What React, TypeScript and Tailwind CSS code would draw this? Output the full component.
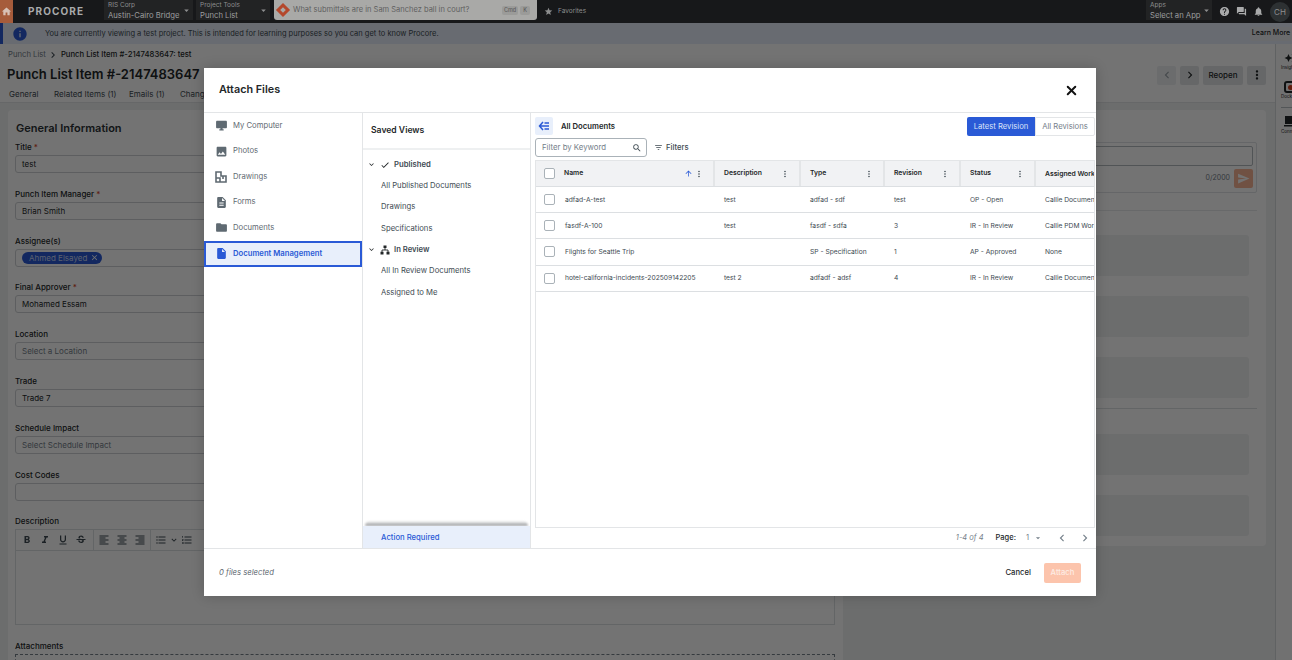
import React from 'react';
import { X } from 'lucide-react';
import {
  MdArrowDropDown,
  MdArrowUpward,
  MdAutoAwesome,
  MdCheck,
  MdChevronLeft,
  MdChevronRight,
  MdClose,
  MdDescription,
  MdDesktopWindows,
  MdExpandMore,
  MdFilterList,
  MdFolder,
  MdFormatAlignCenter,
  MdFormatAlignLeft,
  MdFormatAlignRight,
  MdFormatBold,
  MdFormatItalic,
  MdFormatListBulleted,
  MdFormatListNumbered,
  MdFormatUnderlined,
  MdHelp,
  MdHome,
  MdInfo,
  MdInsertDriveFile,
  MdMoreVert,
  MdNotifications,
  MdPhoto,
  MdQuestionAnswer,
  MdSearch,
  MdSend,
  MdStar,
  MdStrikethroughS,
} from 'react-icons/md';

const fields = [
  { label: 'Title', required: true, value: 'test' },
  { label: 'Punch Item Manager', required: true, value: 'Brian Smith' },
  { label: 'Assignee(s)', chip: 'Ahmed Elsayed' },
  { label: 'Final Approver', required: true, value: 'Mohamed Essam' },
  { label: 'Location', placeholder: 'Select a Location' },
  { label: 'Trade', value: 'Trade 7' },
  { label: 'Schedule Impact', placeholder: 'Select Schedule Impact' },
  { label: 'Cost Codes' },
];

const sources = ['My Computer', 'Photos', 'Drawings', 'Forms', 'Documents'];

const columns = ['Description', 'Type', 'Revision', 'Status'];

const rows = [
  ['adfad-A-test', 'test', 'adfad - sdf', 'test', 'OP - Open', 'Callie Document Workflow'],
  ['fasdf-A-100', 'test', 'fasdf - sdfa', '3', 'IR - In Review', 'Callie PDM Workflow'],
  ['Flights for Seattle Trip', '', 'SP - Specification', '1', 'AP - Approved', 'None'],
  ['hotel-california-incidents-202509142205', 'test 2', 'adfadf - adsf', '4', 'IR - In Review', 'Callie Document Workflow'],
];

function DrawingsIcon() {
  return (
    <svg viewBox="0 0 12 12" className="h-[12px] w-[12px] text-[#5f6a72]" fill="none" stroke="currentColor" strokeWidth="1.6">
      <path d="M1 1h5v4h5v6H1z M1 7h4v4 M6 1v3 M8 5v3" />
    </svg>
  );
}

function TreeIcon() {
  return (
    <svg viewBox="0 0 10 10" className="h-[10px] w-[10px] text-[#232729]" fill="currentColor">
      <path d="M3.5 0.5h3v2.6h-3z M0.5 6.8h3v2.7h-3z M6.5 6.8h3v2.7h-3z" />
      <path d="M5 3v2H2v2M5 5h3v2" fill="none" stroke="currentColor" strokeWidth="0.9" />
    </svg>
  );
}

function SourceIcon({ name }: { name: string }) {
  const cls = 'h-[13px] w-[13px] text-[#5f6a72]';
  if (name === 'My Computer') return <MdDesktopWindows className={cls} />;
  if (name === 'Photos') return <MdPhoto className={cls} />;
  if (name === 'Drawings') return <DrawingsIcon />;
  if (name === 'Forms') return <MdDescription className={cls} />;
  return <MdFolder className={cls} />;
}

function Selector({ top, bottom, width }: { top: string; bottom: string; width: string }) {
  return (
    <div className={`mb-[3px] flex items-center justify-between bg-[#222324] pl-[4px] pr-[1px] ${width}`}>
      <div className="whitespace-nowrap leading-[9px]">
        <div className="text-[6.5px]">{top}</div>
        <div className="mt-[1px] text-[7.7px] text-[#9c9d9e]">{bottom}</div>
      </div>
      <MdArrowDropDown className="h-[11px] w-[11px] shrink-0" />
    </div>
  );
}

function TopBar() {
  return (
    <div className="relative z-20 flex h-[23px] items-stretch bg-[#17181a] text-[#8d8e8f]">
      <div className="flex w-[13px] items-center justify-center bg-[#a65c3b]">
        <MdHome className="h-[11px] w-[11px] text-[#d8c2b6]" />
      </div>
      <div className="ml-[15px] flex w-[76px] items-center text-[10px] font-bold tracking-[1.1px] text-[#a9aaab]">PROCORE</div>
      <Selector top="RIS Corp" bottom="Austin-Cairo Bridge" width="w-[89px]" />
      <div className="w-[3px]" />
      <Selector top="Project Tools" bottom="Punch List" width="w-[74px]" />
      <div className="mb-[3px] ml-[4px] flex w-[263px] items-center rounded-b-[3px] bg-[#a9a9a7] pl-[4px] pr-[7px] text-[#5f5f5f]">
        <span className="h-[10px] w-[10px] rotate-45 border-[3px] border-[#b4472b]" />
        <span className="ml-[5px] flex-1 text-[7.5px]">What submittals are in Sam Sanchez ball in court?</span>
        <span className="rounded-[2px] bg-[#9b9b99] px-[2px] text-[5.5px] font-medium leading-[9px]">Cmd</span>
        <span className="ml-[2px] rounded-[2px] bg-[#9b9b99] px-[3px] text-[5.5px] font-medium leading-[9px]">K</span>
      </div>
      <div className="ml-[7px] flex items-center text-[6.5px]">
        <MdStar className="mr-[5px] h-[9px] w-[9px]" />
        Favorites
      </div>
      <div className="ml-auto flex items-center">
        <div className="flex self-start">
          <Selector top="Apps" bottom="Select an App" width="h-[20px] w-[66px]" />
        </div>
        <MdHelp className="ml-[7px] h-[11px] w-[11px] text-[#a9aaab]" />
        <MdQuestionAnswer className="ml-[6px] h-[11px] w-[11px] text-[#a9aaab]" />
        <MdNotifications className="ml-[6px] h-[11px] w-[11px] text-[#a9aaab]" />
        <div className="ml-[6px] mr-[2px] flex h-[20px] w-[20px] items-center justify-center rounded-full bg-[#2d3133] text-[8px] text-[#8d8e8f]">CH</div>
      </div>
    </div>
  );
}

function Banner() {
  return (
    <div className="flex h-[21px] items-center border-l-[3px] border-[#2a5ad6] bg-[#e6eefa]">
      <MdInfo className="ml-[9px] h-[16px] w-[16px] text-[#2a5ad6]" />
      <span className="ml-[17px] text-[7.5px] text-[#3e4a52]">You are currently viewing a test project. This is intended for learning purposes so you can get to know Procore.</span>
      <span className="ml-auto flex h-[14px] w-[42px] items-center justify-center rounded-[2px] bg-[#eceef2] text-[7px] font-medium text-[#232729]">Learn More</span>
    </div>
  );
}

function Field({ label, required, value, placeholder, chip }: { label: string; required?: boolean; value?: string; placeholder?: string; chip?: string }) {
  return (
    <div className="mb-[15.8px]">
      <div className="h-[13px] text-[8px] font-medium leading-[11px] text-[#232729]">
        {label}
        {required && <span className="text-[#d2401f]"> *</span>}
      </div>
      <div className="flex h-[18px] items-center rounded-[3px] border border-[#ced1d4] bg-white pl-[6px] text-[8px]">
        {chip ? (
          <span className="flex h-[12px] items-center rounded-full bg-[#2a5ad6] pl-[7px] pr-[3px] text-[#c9d6f5]">
            {chip}
            <MdClose className="ml-[3px] h-[9px] w-[9px] text-white" />
          </span>
        ) : (
          <span className={placeholder ? 'text-[#75808a]' : 'text-[#232729]'}>{value ?? placeholder}</span>
        )}
      </div>
    </div>
  );
}

function GeneralCard() {
  const editorIcons = [MdFormatBold, MdFormatItalic, MdFormatUnderlined, MdStrikethroughS];
  const alignIcons = [MdFormatAlignLeft, MdFormatAlignCenter, MdFormatAlignRight];
  return (
    <div className="w-[835px] shrink-0 rounded-t-[4px] bg-white pl-[7px] pr-[8px] pt-[10px]">
      <div className="h-[22px] pl-[1px] text-[11px] font-semibold text-[#2c3236]">General Information</div>
      {fields.map((f) => (
        <Field key={f.label} {...f} />
      ))}
      <div className="h-[13px] text-[8px] font-medium leading-[11px] text-[#232729]">Description</div>
      <div className="h-[96px] border border-[#dcdfe2]">
        <div className="flex h-[21px] items-center border-b border-[#dcdfe2] pl-[5px] text-[#3e4a52]">
          {editorIcons.map((Icon, i) => (
            <Icon key={i} className="mr-[6px] h-[12px] w-[12px]" />
          ))}
          <span className="mr-[4px] h-full w-px bg-[#dcdfe2]" />
          {alignIcons.map((Icon, i) => (
            <Icon key={i} className="mr-[6px] h-[12px] w-[12px]" />
          ))}
          <span className="-ml-[2px] mr-[4px] h-full w-px bg-[#dcdfe2]" />
          <MdFormatListBulleted className="h-[12px] w-[12px]" />
          <MdExpandMore className="mx-[2px] h-[10px] w-[10px]" />
          <MdFormatListNumbered className="h-[12px] w-[12px]" />
        </div>
      </div>
      <div className="mt-[16px] h-[12.5px] text-[8px] font-medium leading-[11px] text-[#232729]">Attachments</div>
      <div className="h-[40px] border border-dashed border-[#75808a]" />
    </div>
  );
}

function ActivityCard() {
  return (
    <div className="flex-1 self-start rounded-[4px] bg-white pb-[10px] pl-[20px] pt-[32px]">
      <div className="mr-[9px] h-[51px] rounded-[2px] border border-[#dfe3e6] pr-[3px] pt-[3px]">
        <div className="h-[20px] rounded-[2px] border border-[#b4babf]" />
        <div className="flex items-center justify-end pt-[3px]">
          <span className="mr-[4px] text-[7px] text-[#75808a]">0/2000</span>
          <span className="flex h-[19px] w-[19px] items-center justify-center rounded-[2px] bg-[#f8b496]">
            <MdSend className="h-[13px] w-[13px] text-white" />
          </span>
        </div>
      </div>
      <div className="mr-[9px] mt-[17px] h-px bg-[#e6e9eb]" />
      <div className="mr-[17px] mt-[24px] flex flex-col gap-[20px]">
        <div className="h-[41px] rounded-[3px] bg-[#f0f1f2]" />
        <div className="h-[41px] rounded-[3px] bg-[#f0f1f2]" />
        <div className="h-[41px] rounded-[3px] bg-[#f0f1f2]" />
      </div>
      <div className="mr-[9px] mt-[10px] h-px bg-[#dcdfe2]" />
      <div className="mr-[17px] mt-[25px] flex flex-col gap-[20px]">
        <div className="h-[41px] rounded-[3px] bg-[#f0f1f2]" />
        <div className="h-[41px] rounded-[3px] bg-[#f0f1f2]" />
      </div>
    </div>
  );
}

function Rail() {
  return (
    <div className="flex w-[17px] shrink-0 flex-col overflow-hidden border-l border-[#d6d9dc] bg-[#fbfbfb] pl-[5px] pt-[8px] text-[#232729]">
      <MdAutoAwesome className="ml-[3px] h-[12px] w-[12px] shrink-0" />
      <span className="h-[7px] shrink-0 whitespace-nowrap text-[4.5px] leading-[7px]">Insights</span>
      <span className="ml-[3px] mt-[10px] flex h-[12px] w-[12px] shrink-0 items-center justify-center rounded-[3px] border-[2px] border-[#232729]">
        <span className="h-[5px] w-[5px] rounded-full bg-[#d2401f]" />
      </span>
      <span className="h-[7px] shrink-0 whitespace-nowrap text-[4.5px] leading-[7px]">Dock Side</span>
      <div className="mt-[7px] h-px w-[11px] shrink-0 bg-[#b8bec3]" />
      <svg viewBox="0 0 12 11" className="ml-[3px] mt-[8px] h-[11px] w-[12px] shrink-0" fill="currentColor">
        <path d="M1 0h11v8H1z M0 9h12v1.5H0z" />
      </svg>
      <span className="mt-[1px] h-[7px] shrink-0 whitespace-nowrap text-[4.5px] leading-[7px]">Connect</span>
    </div>
  );
}

function PageHeader() {
  return (
    <div className="h-[59px] border-b border-[#e3e5e7] bg-white">
      <div className="flex h-[21px] items-center pl-[8px] text-[7.7px] text-[#75808a]">
        Punch List
        <MdChevronRight className="mx-[1px] h-[12px] w-[12px] text-[#3e4a52]" />
        <span className="ml-[1px] font-medium text-[#232729]">Punch List Item #-2147483647: test</span>
      </div>
      <div className="flex h-[20px] items-center pl-[7px] pr-[9px]">
        <span className="text-[13px] font-semibold text-[#232729]">Punch List Item #-2147483647</span>
        <div className="ml-auto flex gap-[4px]">
          <span className="flex h-[19px] w-[19px] items-center justify-center rounded-[2px] bg-[#eef0f1] text-[#9aa2a9]"><MdChevronLeft className="h-[14px] w-[14px]" /></span>
          <span className="flex h-[19px] w-[19px] items-center justify-center rounded-[2px] bg-[#e3e5e7] text-[#232729]"><MdChevronRight className="h-[14px] w-[14px]" /></span>
          <span className="flex h-[19px] w-[40px] items-center justify-center rounded-[2px] bg-[#e3e5e7] text-[8px] font-medium text-[#232729]">Reopen</span>
          <span className="flex h-[19px] w-[19px] items-center justify-center rounded-[2px] bg-[#e3e5e7] text-[#232729]"><MdMoreVert className="h-[14px] w-[14px]" /></span>
        </div>
      </div>
      <div className="flex h-[17px] items-center pl-[9px] text-[8px] text-[#3e4a52]">
        <span className="w-[45px]">General</span>
        <span className="w-[75px]">Related Items (1)</span>
        <span className="w-[51px]">Emails (1)</span>
        <span>Change History</span>
      </div>
    </div>
  );
}

function SavedViews() {
  const groups = [
    { title: 'Published', icon: <MdCheck className="h-[10px] w-[10px] text-[#232729]" />, items: ['All Published Documents', 'Drawings', 'Specifications'] },
    { title: 'In Review', icon: <TreeIcon />, items: ['All In Review Documents', 'Assigned to Me'] },
  ];
  return (
    <div className="flex w-[169px] shrink-0 flex-col border-l border-r border-[#e3e5e7]">
      <div className="flex h-[37px] shrink-0 items-center border-b-2 border-[#eef0f1] pl-[8px] text-[8.6px] font-semibold text-[#232729]">Saved Views</div>
      <div className="flex-1 pt-[4px]">
        {groups.map((g) => (
          <div key={g.title}>
            <div className="flex h-[21.3px] items-center pl-[4px] text-[7.7px] font-semibold text-[#3e4a52]">
              <MdExpandMore className="h-[9px] w-[9px] text-[#232729]" />
              <span className="ml-[4px]">{g.icon}</span>
              <span className="ml-[4px]">{g.title}</span>
            </div>
            {g.items.map((item) => (
              <div key={item} className="flex h-[21.3px] items-center pl-[18px] text-[7.7px] text-[#3e4a52]">{item}</div>
            ))}
          </div>
        ))}
      </div>
      <div className="mx-[2px] h-[5px] shrink-0 rounded-t-full bg-gradient-to-b from-white to-[#8f9194] blur-[1px]" />
      <div className="relative flex h-[22px] shrink-0 items-center bg-[#e8effb] pl-[18px] pt-[1px] text-[7.7px] font-medium text-[#2a5ad6]">Action Required</div>
    </div>
  );
}

function DocsTable() {
  const gridCols = 'grid-cols-[179px_86px_84px_76px_75px_59px]';
  return (
    <div className="flex-1 overflow-hidden border border-[#e3e5e7]">
      <div className={`grid h-[26px] border-b border-[#dcdfe2] bg-[#f1f2f4] ${gridCols}`}>
        <div className="flex items-center border-r-2 border-[#e3e5e7] pl-[8px] pr-[9px] text-[6.8px] font-semibold text-[#232729]">
          <span className="mr-[9px] h-[11px] w-[11px] rounded-[2px] border border-[#aab2b8] bg-white" />
          Name
          <MdArrowUpward className="ml-auto mr-[1px] h-[9px] w-[9px] text-[#2a5ad6]" />
          <MdMoreVert className="h-[10px] w-[10px] text-[#3e4a52]" />
        </div>
        {columns.map((c) => (
          <div key={c} className="flex items-center justify-between border-r-2 border-[#e3e5e7] pl-[9px] pr-[9px] text-[6.8px] font-semibold text-[#232729]">
            {c}
            <MdMoreVert className="h-[10px] w-[10px] text-[#3e4a52]" />
          </div>
        ))}
        <div className="overflow-hidden whitespace-nowrap pl-[9px] text-[6.8px] font-semibold leading-[26px] text-[#232729]">Assigned Workflow</div>
      </div>
      {rows.map((r) => (
        <div key={r[0]} className={`grid h-[26.2px] items-center border-b border-[#dcdfe2] text-[6.7px] text-[#3e4a52] ${gridCols}`}>
          <div className="flex items-center pl-[8px]">
            <span className="mr-[10px] h-[11px] w-[11px] shrink-0 rounded-[2px] border border-[#aab2b8] bg-white" />
            <span className="whitespace-nowrap">{r[0]}</span>
          </div>
          <div className="pl-[9px]">{r[1]}</div>
          <div className="pl-[9px]">{r[2]}</div>
          <div className="pl-[9px]">{r[3]}</div>
          <div className="pl-[9px]">{r[4]}</div>
          <div className="overflow-hidden whitespace-nowrap pl-[9px]">{r[5]}</div>
        </div>
      ))}
    </div>
  );
}

function DocsPane() {
  return (
    <div className="flex min-w-0 flex-1 flex-col pl-[4px] pr-[1px]">
      <div className="flex h-[25px] shrink-0 items-start pt-[4px]">
        <span className="flex h-[18px] w-[18px] items-center justify-center rounded-[2px] bg-[#e8effb]">
          <svg viewBox="0 0 12 10" className="h-[10px] w-[12px] text-[#2a5ad6]" fill="none" stroke="currentColor" strokeWidth="1.5">
            <path d="M5 1 1.5 5 5 9 M1.5 5H11 M6.5 2H11 M6.5 8H11" />
          </svg>
        </span>
        <span className="ml-[8px] mt-[4px] text-[7.7px] font-semibold text-[#232729]">All Documents</span>
        <div className="ml-auto flex h-[19px] text-[7.7px]">
          <span className="flex w-[68px] items-center justify-center rounded-l-[2px] bg-[#2a5ad6] text-[#dbe4f9]">Latest Revision</span>
          <span className="flex w-[60px] items-center justify-center rounded-r-[2px] border border-[#e3e5e7] text-[#75808a]">All Revisions</span>
        </div>
      </div>
      <div className="flex h-[22px] shrink-0 items-start">
        <div className="flex h-[19px] w-[112px] items-center justify-between rounded-[3px] border border-[#aab2b8] pl-[6px] pr-[4px] text-[7.8px] text-[#75808a]">
          Filter by Keyword
          <MdSearch className="h-[10px] w-[10px] text-[#3e4a52]" />
        </div>
        <span className="ml-[7px] flex h-[19px] items-center text-[7.7px] font-medium text-[#3e4a52]">
          <MdFilterList className="mr-[3px] h-[9px] w-[9px]" />
          Filters
        </span>
      </div>
      <DocsTable />
      <div className="flex h-[20px] shrink-0 items-center justify-end pr-[3px] text-[7.5px] text-[#3e4a52]">
        <span className="italic text-[#75808a]">1-4 of 4</span>
        <span className="ml-[12px] font-medium text-[#232729]">Page:</span>
        <span className="ml-[10px] text-[#75808a]">1</span>
        <MdArrowDropDown className="ml-[4px] h-[10px] w-[10px] text-[#75808a]" />
        <MdChevronLeft className="ml-[12px] h-[14px] w-[14px] text-[#75808a]" />
        <MdChevronRight className="ml-[9px] h-[14px] w-[14px] text-[#75808a]" />
      </div>
    </div>
  );
}

function AttachFilesModal() {
  return (
    <div className="absolute left-[204px] top-[68px] z-10 flex h-[528px] w-[892px] flex-col bg-white shadow-[0_0_12px_rgba(0,0,0,0.2)]">
      <div className="flex h-[45px] shrink-0 items-center justify-between border-b border-[#e3e5e7] pl-[15px] pr-[17px] pt-[1px]">
        <span className="text-[10.8px] font-semibold text-[#232729]">Attach Files</span>
        <X className="h-[15px] w-[15px] text-[#111]" strokeWidth={3.2} />
      </div>
      <div className="flex min-h-0 flex-1">
        <div className="w-[158px] shrink-0">
          {sources.map((s) => (
            <div key={s} className="flex h-[25.5px] items-center pl-[11px] text-[7.7px] text-[#5f6a72]">
              <span className="flex w-[18px]"><SourceIcon name={s} /></span>
              {s}
            </div>
          ))}
          <div className="flex h-[26px] items-center border-2 border-[#2a5ad6] bg-[#e8effb] pl-[9px] text-[7.7px] font-semibold text-[#2a5ad6]">
            <span className="flex w-[18px]"><MdInsertDriveFile className="h-[13px] w-[13px]" /></span>
            Document Management
          </div>
        </div>
        <SavedViews />
        <DocsPane />
      </div>
      <div className="flex h-[48px] shrink-0 items-center border-t border-[#e3e5e7] px-[15px]">
        <span className="text-[7.7px] italic text-[#5f6a72]">0 files selected</span>
        <span className="ml-auto text-[7.7px] font-medium text-[#232729]">Cancel</span>
        <span className="ml-[13px] flex h-[20px] w-[37px] items-center justify-center rounded-[2px] bg-[#fcc4ac] text-[7.7px] font-medium text-[#fdece4]">Attach</span>
      </div>
    </div>
  );
}

export default function App() {
  return (
    <div className="relative h-[660px] w-[1292px] overflow-hidden bg-[#f0f1f2] font-['Inter',sans-serif]">
      <TopBar />
      <Banner />
      <div className="flex h-[616px]">
        <div className="min-w-0 flex-1">
          <PageHeader />
          <div className="flex pl-[8px] pr-[9px] pt-[7px]">
            <GeneralCard />
            <ActivityCard />
          </div>
        </div>
        <Rail />
      </div>
      {/* dim layer stops under the top bar, the bar has its own muted colours */}
      <div className="absolute inset-x-0 bottom-0 top-[23px] bg-black/55" />
      <AttachFilesModal />
    </div>
  );
}
